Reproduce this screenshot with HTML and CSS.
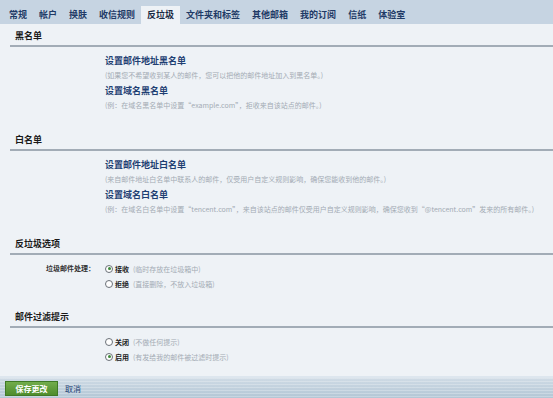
FILE: index.html
```html
<!DOCTYPE html>
<html>
<head>
    <title>设置 - 反垃圾</title>
    <link rel="stylesheet" href="styles.css">
</head>
<body>
    <div class="tabs">
        <span class="tab">常规</span>
        <span class="tab">帐户</span>
        <span class="tab">换肤</span>
        <span class="tab">收信规则</span>
        <span class="tab active">反垃圾</span>
        <span class="tab">文件夹和标签</span>
        <span class="tab">其他邮箱</span>
        <span class="tab">我的订阅</span>
        <span class="tab">信纸</span>
        <span class="tab">体验室</span>
    </div>

    <div class="section">
        <div class="sec-head">黑名单</div>
        <div class="sec-body">
            <div class="item-title">设置邮件地址黑名单</div>
            <div class="item-desc">(如果您不希望收到某人的邮件，您可以把他的邮件地址加入到黑名单。)</div>
            <div class="item-title">设置域名黑名单</div>
            <div class="item-desc">(例：在域名黑名单中设置“example.com”，拒收来自该站点的邮件。)</div>
        </div>
    </div>

    <div class="section">
        <div class="sec-head">白名单</div>
        <div class="sec-body">
            <div class="item-title">设置邮件地址白名单</div>
            <div class="item-desc">(来自邮件地址白名单中联系人的邮件，仅受用户自定义规则影响，确保您能收到他的邮件。)</div>
            <div class="item-title">设置域名白名单</div>
            <div class="item-desc">(例：在域名白名单中设置“tencent.com”，来自该站点的邮件仅受用户自定义规则影响，确保您收到“@tencent.com”发来的所有邮件。)</div>
        </div>
    </div>

    <div class="section">
        <div class="sec-head">反垃圾选项</div>
        <div class="sec-body opt-body">
            <div class="opt-label">垃圾邮件处理：</div>
            <div class="opts">
                <div class="opt"><span class="radio checked"></span><b>接收</b><span class="opt-desc">(临时存放在垃圾箱中)</span></div>
                <div class="opt"><span class="radio"></span><b>拒绝</b><span class="opt-desc">(直接删除，不放入垃圾箱)</span></div>
            </div>
        </div>
    </div>

    <div class="section last">
        <div class="sec-head">邮件过滤提示</div>
        <div class="sec-body">
            <div class="opt"><span class="radio"></span><b>关闭</b><span class="opt-desc">(不做任何提示)</span></div>
            <div class="opt"><span class="radio checked"></span><b>启用</b><span class="opt-desc">(有发给我的邮件被过滤时提示)</span></div>
        </div>
    </div>

    <div class="footer">
        <button class="save">保存更改</button>
        <span class="cancel">取消</span>
    </div>
</body>
</html>
```

FILE: styles.css
```css
body {
    margin: 0;
    font-family: "Noto Sans CJK SC", "Liberation Sans", sans-serif;
    background-color: #eef2f6;
    height: 398px;
    overflow: hidden;
    display: flex;
    flex-direction: column;
}
.tabs {
    display: flex;
    height: 24px;
    padding-left: 3px;
    background-color: #c6d4e2;
}
.tab {
    margin-top: 6px;
    height: 18px;
    line-height: 18px;
    padding: 0 6px;
    font-size: 9px;
    font-weight: bold;
    color: #1f3a66;
}
.tab.active {
    background-color: #eef2f6;
    color: #1a2a44;
}
.sec-head {
    margin: 3px 0 0 10px;
    padding-left: 5px;
    line-height: 18px;
    font-size: 9px;
    font-weight: bold;
    color: #1a1a1a;
    border-bottom: 2px solid #a2acb6;
}
.sec-body {
    padding: 6px 0 15px 105px;
}
.item-title {
    line-height: 15px;
    font-size: 9px;
    font-weight: bold;
    color: #1f3f73;
}
.item-desc {
    line-height: 15px;
    font-size: 7px;
    color: #a3abb4;
    white-space: nowrap;
}
.opt-body {
    display: flex;
    padding-left: 0;
    padding-bottom: 14px;
}
.opt-label {
    width: 95px;
    padding-right: 10px;
    box-sizing: content-box;
    text-align: right;
    line-height: 15px;
    font-size: 7px;
    font-weight: bold;
    color: #333;
}
.opt {
    display: flex;
    align-items: center;
    height: 15px;
    font-size: 7px;
    color: #222;
}
.opt b {
    margin-left: 2px;
}
.opt-desc {
    margin-left: 4px;
    color: #a3abb4;
}
.radio {
    width: 6px;
    height: 6px;
    border: 1px solid #6b7178;
    border-radius: 50%;
    background-color: #fff;
    position: relative;
}
.radio.checked::after {
    content: "";
    position: absolute;
    left: 1.5px;
    top: 1.5px;
    width: 3px;
    height: 3px;
    border-radius: 50%;
    background-color: #3d8a3a;
}
.last .sec-body {
    padding-bottom: 12px;
}
.footer {
    flex: 1;
    display: flex;
    align-items: center;
    gap: 7px;
    padding-left: 5px;
    border-top: 2px solid #dde6ee;
    background-color: #bccddb;
    background-image: repeating-linear-gradient(180deg, rgba(255,255,255,0.25) 0 1px, transparent 1px 3px),
        linear-gradient(180deg, #cfdbe5, #b3c6d5);
}
.save {
    width: 53px;
    height: 15px;
    padding: 0;
    border: 1px solid #3f7a25;
    background: linear-gradient(180deg, #72ad4c, #4f8c2d);
    color: white;
    font-family: inherit;
    font-size: 8px;
    font-weight: bold;
    cursor: pointer;
}
.cancel {
    font-size: 8px;
    color: #1f3f73;
}
```
